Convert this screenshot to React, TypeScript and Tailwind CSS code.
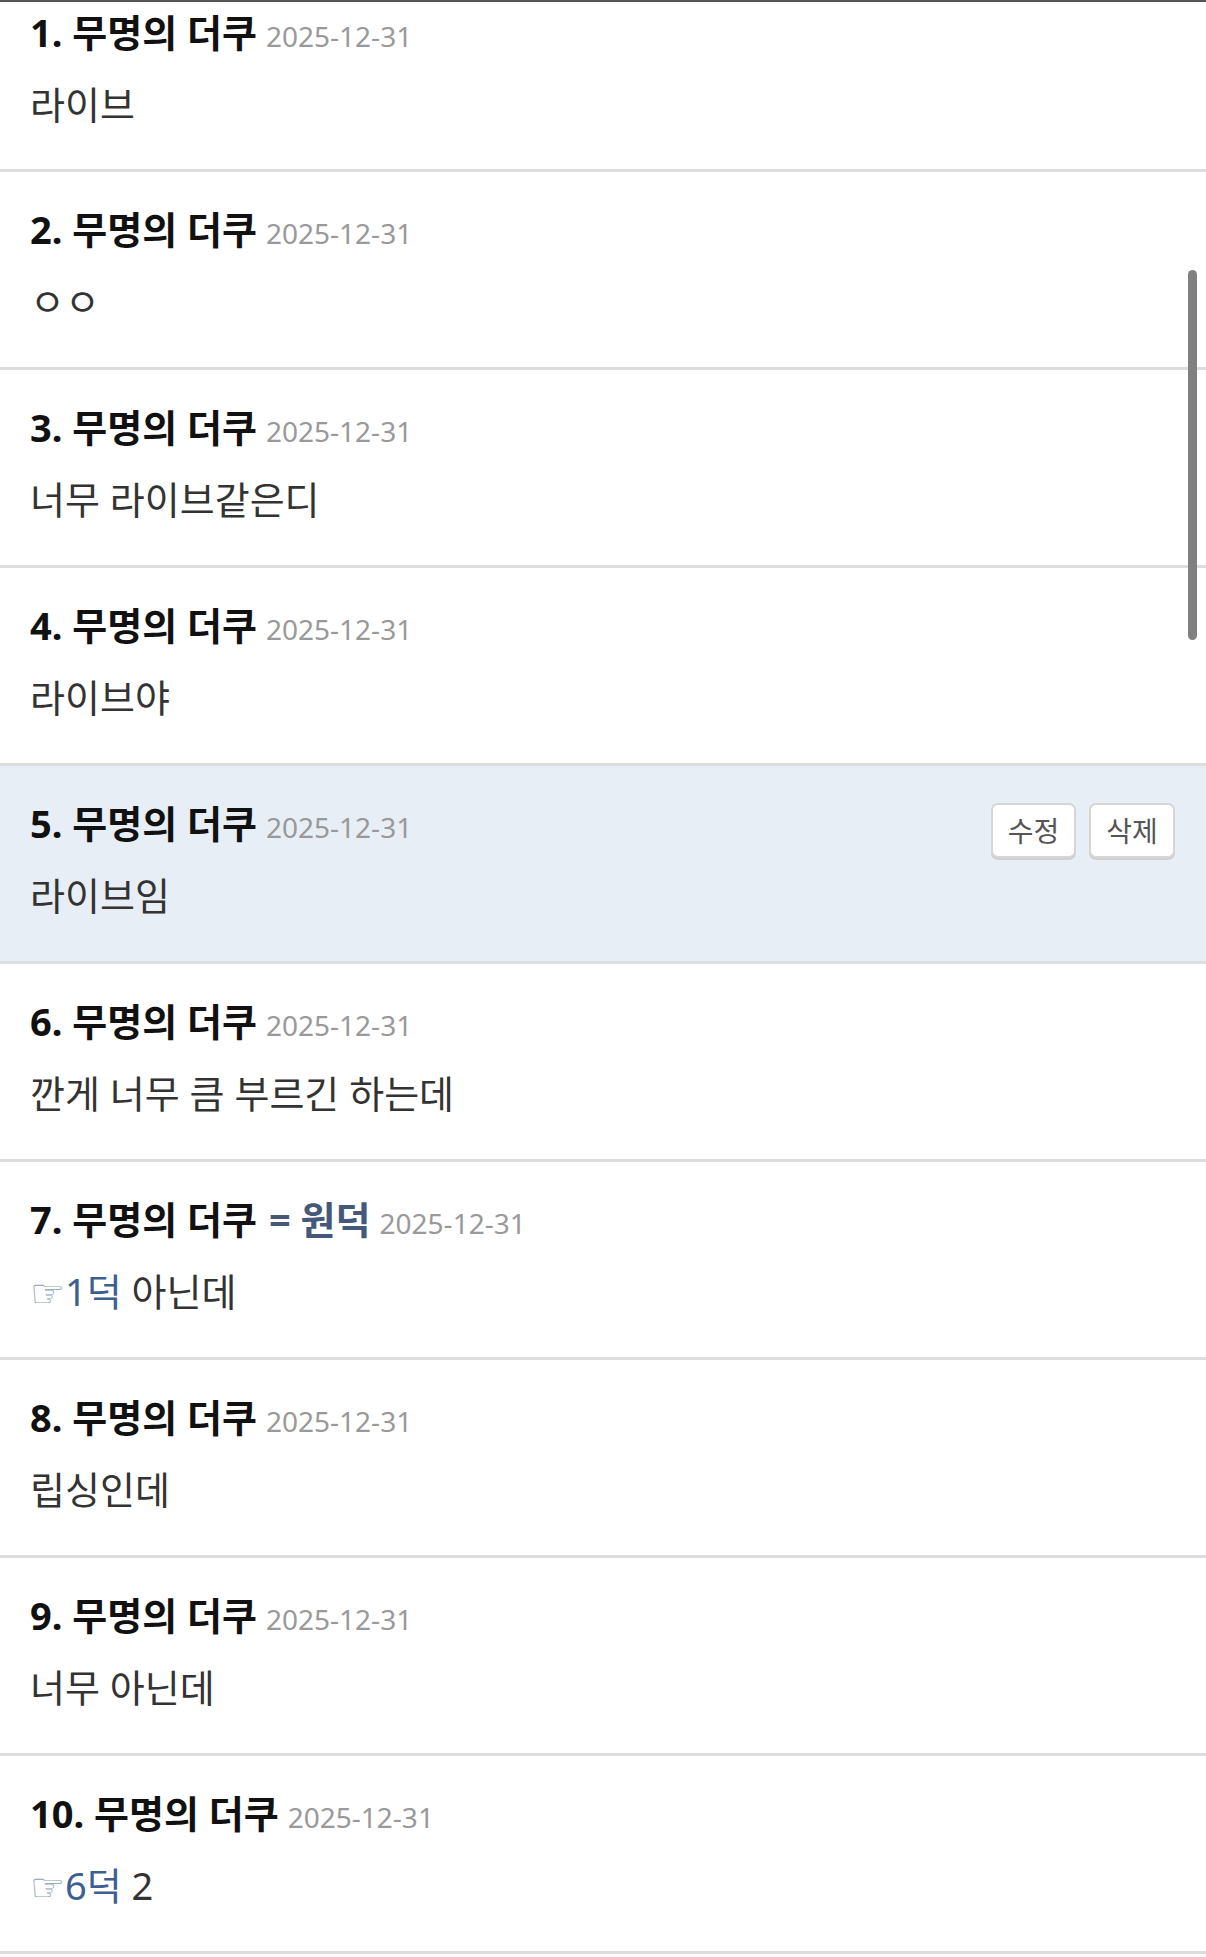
import React from "react"

interface Comment {
    no: number
    extra?: string
    date: string
    body: React.ReactNode
    mine?: boolean
}

const Pointer = ({ label }: { label: string }) => (
    <>
        <span className="text-[39px] leading-[0] text-[#8a9dba] font-['DejaVu_Sans',sans-serif] align-[-1px]">☞</span>
        <span className="text-[#3c5f91]">{label}</span>
    </>
)

const comments: Comment[] = [
    { no: 1, date: "2025-12-31", body: "라이브" },
    { no: 2, date: "2025-12-31", body: "ㅇㅇ" },
    { no: 3, date: "2025-12-31", body: "너무 라이브같은디" },
    { no: 4, date: "2025-12-31", body: "라이브야" },
    { no: 5, date: "2025-12-31", body: "라이브임", mine: true },
    { no: 6, date: "2025-12-31", body: "깐게 너무 큼 부르긴 하는데" },
    {
        no: 7,
        extra: "= 원덕",
        date: "2025-12-31",
        body: (
            <>
                <Pointer label="1덕" /> 아닌데
            </>
        ),
    },
    { no: 8, date: "2025-12-31", body: "립싱인데" },
    { no: 9, date: "2025-12-31", body: "너무 아닌데" },
    {
        no: 10,
        date: "2025-12-31",
        body: (
            <>
                <Pointer label="6덕" /> 2
            </>
        ),
    },
]

function CommentRow({ c, first }: { c: Comment; first: boolean }) {
    return (
        <li
            className={`border-b-[3px] border-[#dddddd] pl-[30px] pr-[31px] ${first ? "pt-[5px] pb-[40px]" : "pt-[32px] pb-[41px]"} ${c.mine ? "bg-[#e8eef5]" : "bg-white"}`}
        >
            <div className="flex h-[50px] items-start justify-between">
                <div className="flex items-baseline whitespace-nowrap leading-[50px]">
                    <span className="text-[38px] font-bold text-[#111111]">
                        {c.no}. 무명의 더쿠
                    </span>
                    {c.extra && (
                        <span className="ml-[12px] text-[38px] font-bold text-[#44597a]">{c.extra}</span>
                    )}
                    <span className="ml-[9px] text-[28px] text-[#999999]">{c.date}</span>
                </div>
                {c.mine && (
                    <div className="mt-[5px] flex gap-[13px]">
                        <button className="h-[55px] w-[85px] rounded-[7px] border-2 border-[#d6d6d6] bg-white text-[28px] text-[#555555] shadow-[0_2px_0_#d0d0d0]">
                            수정
                        </button>
                        <button className="h-[55px] w-[86px] rounded-[7px] border-2 border-[#d6d6d6] bg-white text-[28px] text-[#555555] shadow-[0_2px_0_#d0d0d0]">
                            삭제
                        </button>
                    </div>
                )}
            </div>
            <div className="mt-[22px] h-[50px] whitespace-nowrap text-[38px] leading-[50px] text-[#333333]">
                {c.body}
            </div>
        </li>
    )
}

export default function App() {
    return (
        <div className="relative min-h-[1957px] w-[1206px] overflow-hidden bg-white font-['Noto_Sans','Noto_Sans_CJK_KR',sans-serif] [font-feature-settings:'palt']">
            <ul className="border-t-2 border-[#555555]">
                {comments.map((c, i) => (
                    <CommentRow key={c.no} c={c} first={i === 0} />
                ))}
            </ul>
            {/* overlay scrollbar */}
            <div className="absolute right-[9px] top-[270px] h-[370px] w-[9px] rounded-full bg-[#808080]" />
        </div>
    )
}
